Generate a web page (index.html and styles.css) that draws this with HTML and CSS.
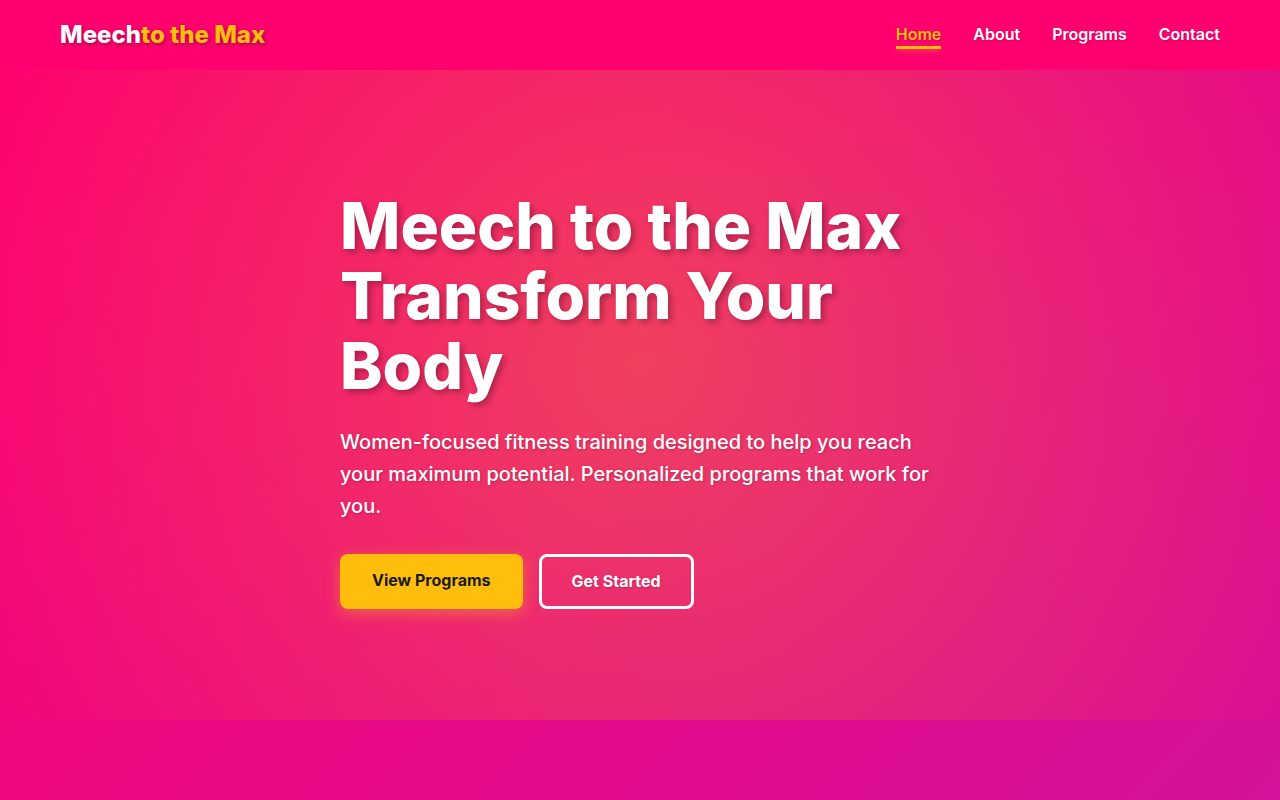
FILE: index.html
```html
<!DOCTYPE html>
<html lang="en">
<head>
    <meta charset="UTF-8">
    <meta name="viewport" content="width=device-width, initial-scale=1.0">
    <title>Meech to the Max</title>
    <link rel="stylesheet" href="styles.css">
</head>
<body>
    <header class="navbar">
        <div class="nav-container">
            <a href="#" class="logo">Meech<span class="accent">to the Max</span></a>
            <nav class="nav-menu">
                <a href="#" class="nav-link active">Home</a>
                <a href="#about" class="nav-link">About</a>
                <a href="#programs" class="nav-link">Programs</a>
                <a href="#contact" class="nav-link">Contact</a>
            </nav>
        </div>
    </header>

    <main class="hero">
        <div class="hero-content">
            <h1 class="hero-title">Meech to the Max Transform Your Body</h1>
            <p class="hero-text">Women-focused fitness training designed to help you reach your maximum potential. Personalized programs that work for you.</p>
            <div class="hero-buttons">
                <a href="#programs" class="btn btn-primary">View Programs</a>
                <a href="#contact" class="btn btn-secondary">Get Started</a>
            </div>
        </div>
    </main>
</body>
</html>
```

FILE: styles.css
```css
* {
    margin: 0;
    padding: 0;
    box-sizing: border-box;
}

body {
    font-family: Inter, "Liberation Sans", sans-serif;
    line-height: 1.6;
    color: #fff;
    min-height: 100vh;
    background: linear-gradient(135deg, #ff006e 0%, #d4129b 100%);
}

a {
    text-decoration: none;
}

/* Navigation */
.navbar {
    background: #ff006e;
}

.nav-container {
    display: flex;
    justify-content: space-between;
    align-items: center;
    max-width: 1200px;
    height: 70px;
    margin: 0 auto;
    padding: 0 20px;
}

.logo {
    font-size: 24px;
    font-weight: 800;
    color: #fff;
    text-shadow: 2px 2px 4px rgba(0, 0, 0, 0.3);
}

.accent {
    color: #ffbe0b;
}

.nav-menu {
    display: flex;
    gap: 32px;
}

.nav-link {
    padding-top: 1px;
    font-size: 16px;
    font-weight: 600;
    line-height: 24px;
    color: #fff;
    text-shadow: 1px 1px 2px rgba(0, 0, 0, 0.2);
}

.nav-link::after {
    content: "";
    display: block;
    height: 3px;
}

.nav-link.active {
    color: #ffbe0b;
}

.nav-link.active::after {
    background: #ffbe0b;
    box-shadow: 0 2px 4px rgba(255, 190, 11, 0.4);
}

/* Hero */
.hero {
    display: flex;
    align-items: center;
    justify-content: center;
    min-height: 650px;
    padding: 90px 20px 80px;
    background: radial-gradient(circle at 50% 45%, rgba(255, 190, 11, 0.3) 0%, rgba(255, 0, 110, 0.15) 100%);
}

.hero-content {
    max-width: 600px;
}

.hero-title {
    font-size: 64px;
    font-weight: 800;
    line-height: 70px;
    margin-bottom: 25px;
    text-shadow: 3px 3px 6px rgba(0, 0, 0, 0.3);
}

.hero-text {
    font-size: 20px;
    font-weight: 500;
    line-height: 32px;
    margin-bottom: 32px;
    text-shadow: 1px 1px 3px rgba(0, 0, 0, 0.2);
}

.hero-buttons {
    display: flex;
    gap: 16px;
}

.btn {
    font-size: 16px;
    font-weight: 700;
    line-height: 25px;
    border-radius: 8px;
}

.btn-primary {
    padding: 14px 32px;
    color: #1a1a1a;
    background: #ffbe0b;
    box-shadow: 0 4px 15px rgba(255, 190, 11, 0.4);
}

.btn-secondary {
    padding: 12px 30px;
    color: #fff;
    border: 3px solid #fff;
    text-shadow: 1px 1px 2px rgba(0, 0, 0, 0.2);
}
```
